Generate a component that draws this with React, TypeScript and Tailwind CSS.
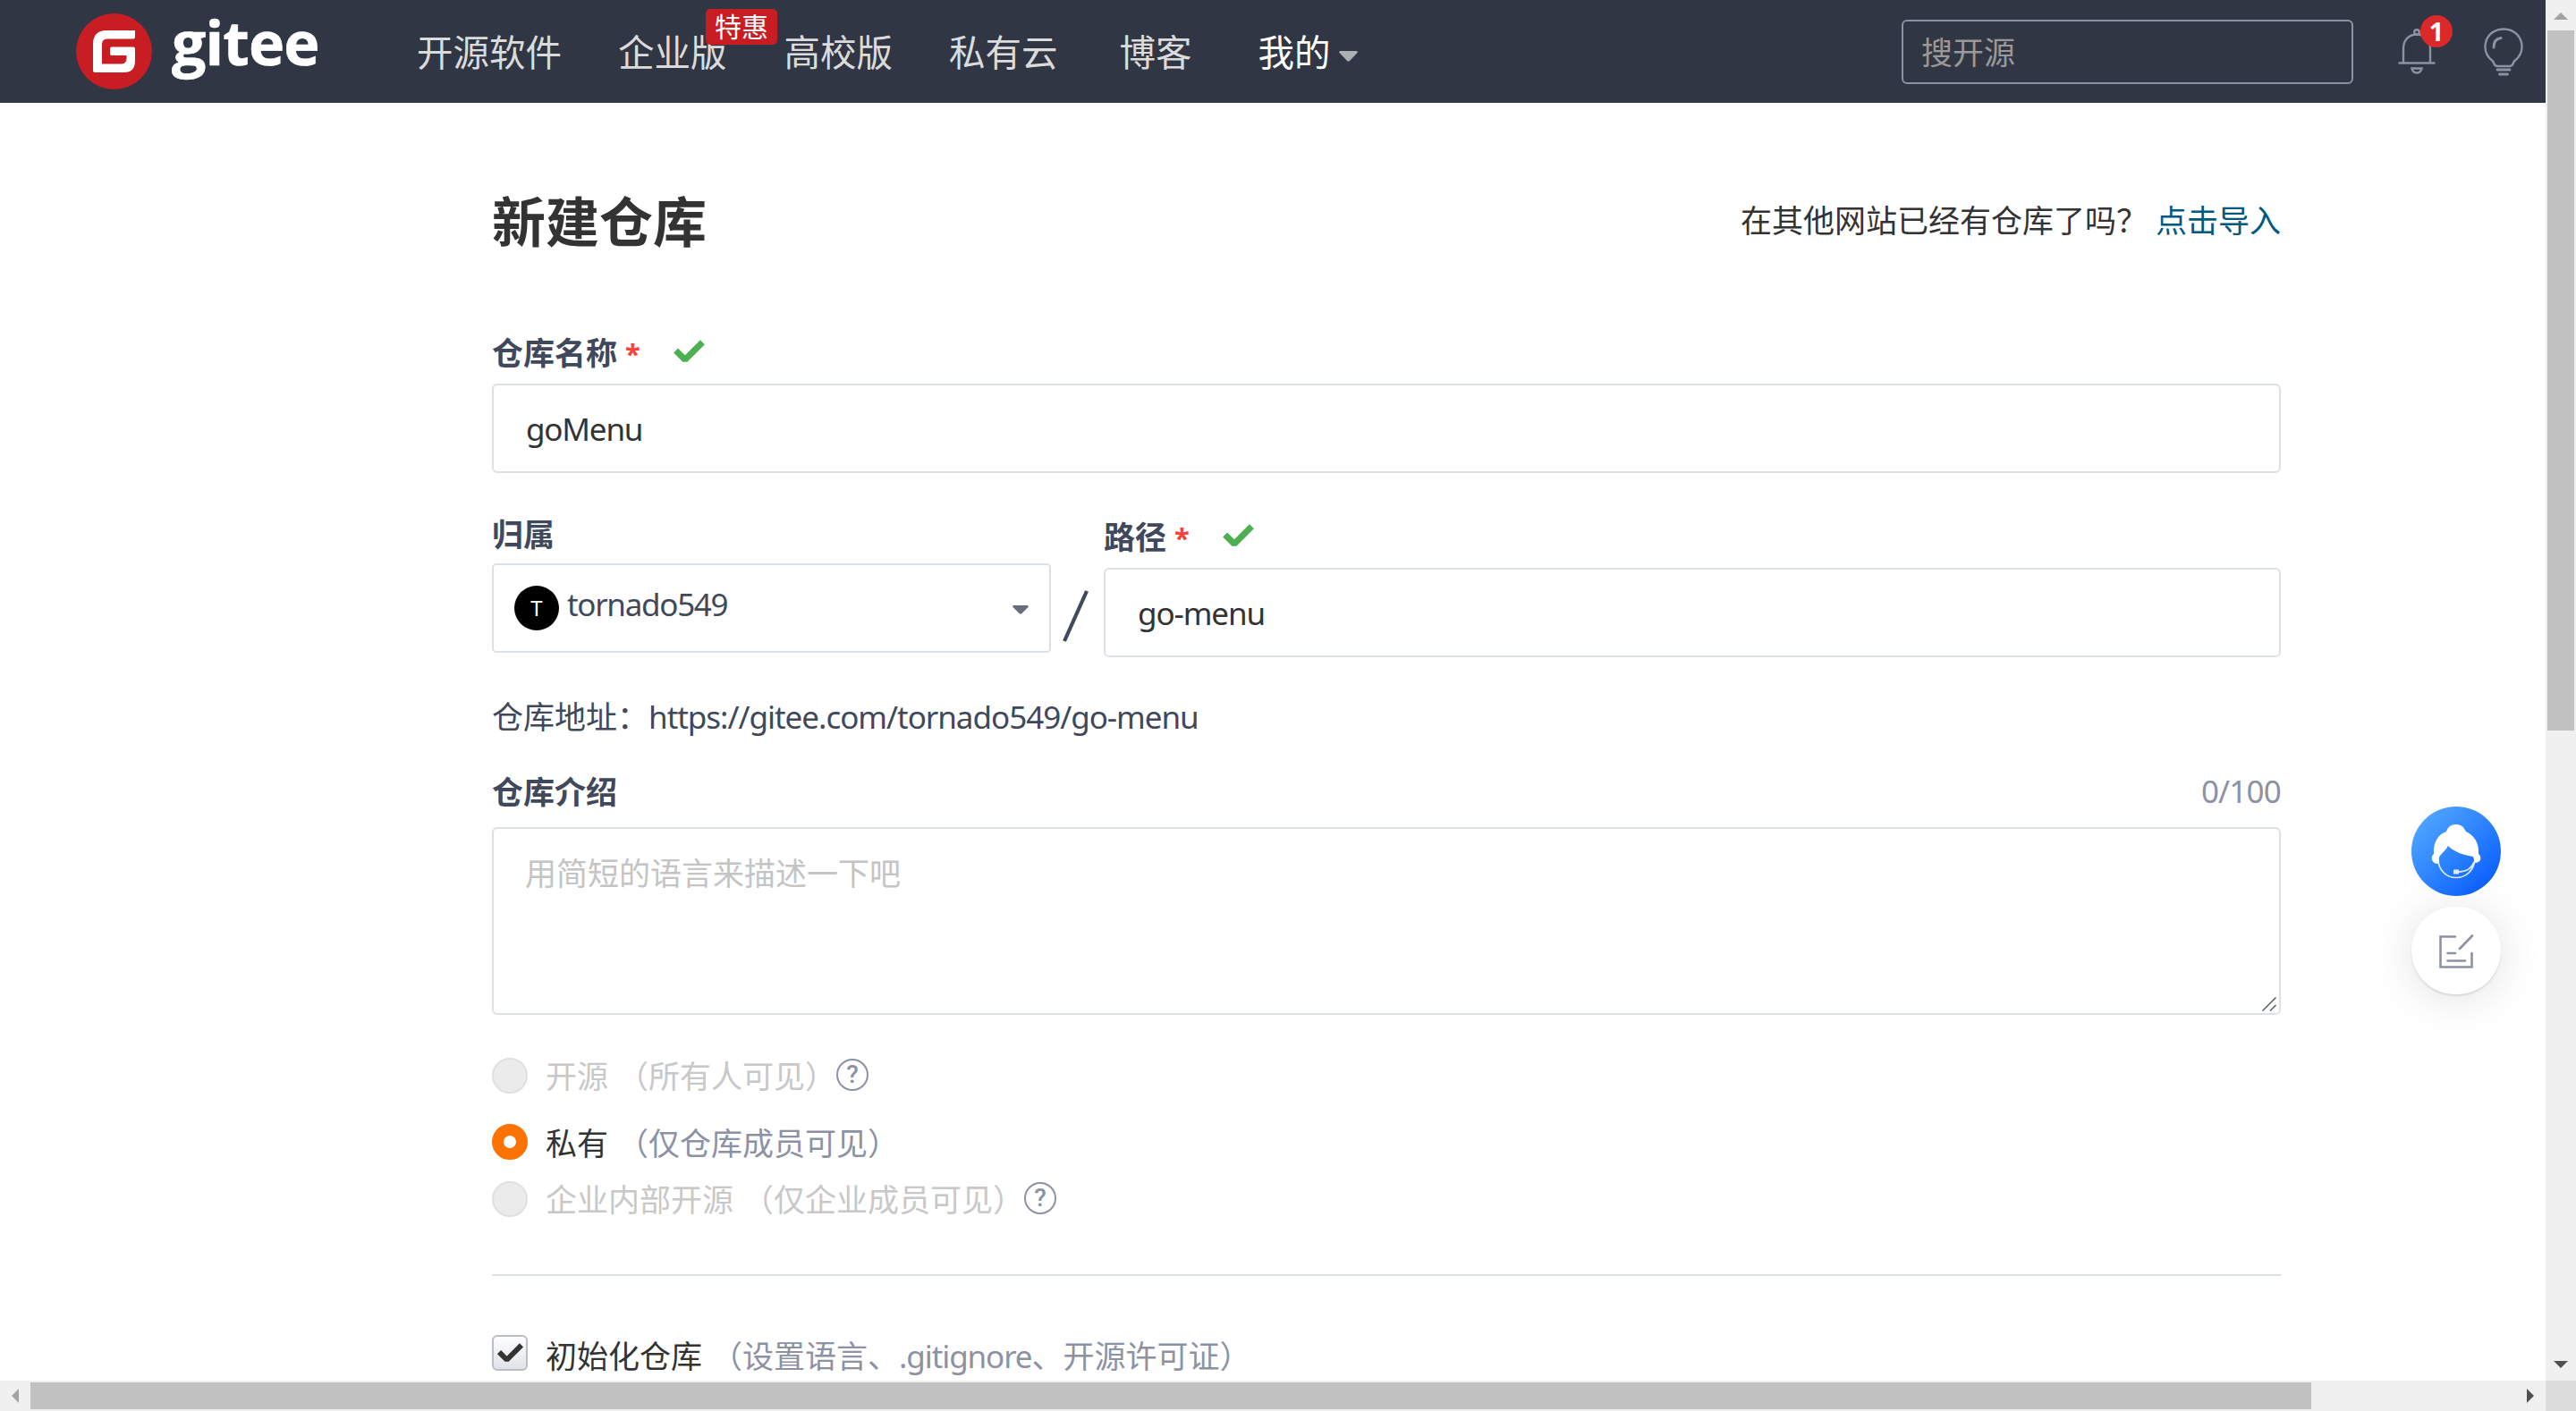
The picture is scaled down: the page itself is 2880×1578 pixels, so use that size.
import { useState } from "react";
import clsx from "clsx";

const NAV_ITEMS = [
  { label: "开源软件", className: "ml-[110px]" },
  { label: "企业版", className: "ml-[63px]", badge: "特惠" },
  { label: "高校版", className: "ml-16" },
  { label: "私有云", className: "ml-[63px]" },
  { label: "博客", className: "ml-[69px]" },
];

const VISIBILITY = [
  { id: "public", label: "开源", hint: "（所有人可见）", disabled: true, help: true, className: "mt-12" },
  { id: "private", label: "私有", hint: "（仅仓库成员可见）", disabled: false, help: false, className: "mt-[34px]" },
  { id: "inner", label: "企业内部开源", hint: "（仅企业成员可见）", disabled: true, help: true, className: "mt-6" },
];

function Logo() {
  return (
    <a className="ml-[85px] flex items-center">
      <svg className="h-[85px] w-[85px]" viewBox="0 0 85 85">
        <circle cx="42.5" cy="42.5" r="42.5" fill="#c71d23" />
        <path
          d="M66 19V26.500Q66 28.500 64 28.500H35Q29 28.500 29 34.500V56.500H50Q56.500 56.500 56.500 50.500V47H40Q38 47 38 45V39.500Q38 37.500 40 37.500H64Q66 37.500 66 39.500V53Q66 66 53.500 66H21Q19 66 19 64V34.500Q19 19 34 19Z"
          fill="#fff"
        />
      </svg>
      <span className="-mt-[22px] ml-[22px] w-[164px] font-['Open_Sans',sans-serif] text-[68px] leading-[84px] font-bold tracking-[-0.9px] text-white [-webkit-text-stroke:0.6px_#fff]">
        gitee
      </span>
    </a>
  );
}

function BellIcon() {
  return (
    <svg className="h-[52px] w-[42px]" viewBox="0 0 42 52" fill="none" stroke="#8c92a4" strokeWidth="2.4">
      <circle cx="21" cy="4" r="2.8" />
      <path d="M6 39V22C6 13 12 6.500 21 6.500S36 13 36 22V39" />
      <path d="M1.500 38.500H40.500" strokeLinecap="round" />
      <path d="M15.500 44.500H26.500Q25.500 49.500 21 49.500T15.500 44.500Z" />
    </svg>
  );
}

function BulbIcon() {
  return (
    <svg className="h-[54px] w-[44px]" viewBox="0 0 44 54" fill="none" stroke="#8c92a4" strokeWidth="2.4" strokeLinecap="round">
      <path d="M22 1.500C10 1.500 1.500 10 1.500 21.500C1.500 28 5 33.500 9.500 37C12 39 11 43 15 43H29C33 43 32 39 34.500 37C39 33.500 42.500 28 42.500 21.500C42.500 10 34 1.500 22 1.500Z" />
      <path d="M11 22Q11 12.500 19 11.500" strokeWidth="3" />
      <path d="M15 47H29M17.500 52H26.500" strokeWidth="2.8" />
    </svg>
  );
}

function Check({ className }: { className?: string }) {
  return (
    <svg className={className} viewBox="0 0 36 27">
      <path
        d="M3.500 12.500L13.500 22.500L32.500 3.500"
        fill="none"
        stroke="currentColor"
        strokeWidth="6.800"
        strokeLinejoin="bevel"
      />
    </svg>
  );
}

function HelpIcon() {
  return (
    <span className="mb-[2px] flex h-9 w-9 items-center justify-center rounded-full border-[2.5px] border-[#8c92a4] font-['Roboto',sans-serif] text-[28px] leading-none font-medium text-[#8c92a4]">
      ?
    </span>
  );
}

function Arrow({ className, d }: { className?: string; d: string }) {
  return (
    <svg className={clsx("h-4 w-4", className)} viewBox="0 0 16 16">
      <path d={d} fill="currentColor" />
    </svg>
  );
}

function FieldLabel({ text, className }: { text: string; className?: string }) {
  return (
    <div className={clsx("flex h-10 items-center font-bold text-[#40485b]", className)}>
      <span>{text}</span>
      <span className="ml-[9px] w-[17px] text-[31px] text-[#f44336]">*</span>
      <Check className="mb-[5px] ml-[36px] h-[28px] w-[37px] text-[#4caf50]" />
    </div>
  );
}

function Header() {
  return (
    <header className="flex h-[115px] shrink-0 items-center bg-[#303643]">
      <Logo />
      <nav className="mt-[2px] flex items-center text-[40.5px] leading-[60px] whitespace-nowrap text-[#dbdbdb]">
        {NAV_ITEMS.map((item) => (
          <a key={item.label} className={clsx("relative", item.className)}>
            {item.label}
            {item.badge && (
              <span className="absolute -top-[19px] left-[98px] flex h-10 w-20 items-center justify-center rounded-[5px] bg-[#c71d23] text-[30px] text-white">
                {item.badge}
              </span>
            )}
          </a>
        ))}
        <a className="ml-[74px] text-white">我的</a>
        <svg className="mt-2 ml-[9px] h-3 w-[21px] text-[#acafb4]" viewBox="0 0 21 12">
          <path d="M1 0H20L21 1.500L11.500 11.500H9.500L0 1.500Z" fill="currentColor" />
        </svg>
      </nav>
      <input
        className="ml-auto h-[72px] w-[505px] rounded-md border-2 border-[#8c92a4] px-5 pt-[2px] text-[35px] placeholder:text-[#999]"
        placeholder="搜开源"
      />
      <div className="relative ml-[50px]">
        <BellIcon />
        <span className="absolute -top-[15px] left-[25px] flex h-9 w-9 items-center justify-center rounded-full bg-[#db2828] font-['Open_Sans',sans-serif] text-[29px] leading-none font-bold text-white">
          1
        </span>
      </div>
      <div className="mr-[25px] ml-[54px]">
        <BulbIcon />
      </div>
    </header>
  );
}

function RepoForm() {
  const [name, setName] = useState("goMenu");
  const [path, setPath] = useState("go-menu");
  const [description, setDescription] = useState("");
  const [visibility, setVisibility] = useState("private");

  return (
    <main className="ml-[550px] w-[2000px]">
      <div className="mt-[98px] flex h-[70px] items-center justify-between">
        <h1 className="text-[60px] leading-[70px] font-bold text-[#333]">新建仓库</h1>
        <p className="mb-[2px] flex">
          在其他网站已经有仓库了吗？
          <a className="ml-[9px] text-[#005980]">点击导入</a>
        </p>
      </div>

      <FieldLabel text="仓库名称" className="mt-[92px]" />
      <input
        className="mt-[14px] block h-[100px] w-full rounded-md border-2 border-[#dce1e6] px-9 tracking-[-1.2px]"
        value={name}
        onChange={(e) => setName(e.target.value)}
      />

      {/* Owner and path */}
      <div className="flex items-start">
        <div className="mt-[49px] w-[625px]">
          <div className="h-10 leading-10 font-bold text-[#40485b]">归属</div>
          <button className="mt-3 flex h-[100px] w-full items-center rounded-[5px] border-2 border-[#dce1e6] px-[23px] text-[#40485b]">
            <span className="flex h-[50px] w-[50px] items-center justify-center rounded-full bg-black text-[24px] text-white">
              T
            </span>
            <span className="mb-2 ml-[9px] tracking-[-1.3px]">tornado549</span>
            <svg className="mt-1 ml-auto h-[10px] w-[18px]" viewBox="0 0 18 10">
              <path d="M1 0H17L18 1.500L10 9.500H8L0 1.500Z" fill="#666e7e" />
            </svg>
          </button>
        </div>
        <svg className="mx-3 mt-[130px] h-[60px] w-[35px]" viewBox="0 0 35 60">
          <path d="M3 58L28 2" stroke="#40485b" strokeWidth="4.200" />
        </svg>
        <div className="mt-[52px] flex-1">
          <FieldLabel text="路径" />
          <input
            className="mt-[14px] block h-[100px] w-full rounded-md border-2 border-[#dce1e6] px-9 tracking-[-1.1px]"
            value={path}
            onChange={(e) => setPath(e.target.value)}
          />
        </div>
      </div>

      <p className="mt-[47px] flex h-10 items-center text-[#40485b]">
        仓库地址：<span className="tracking-[-1.02px]">https://gitee.com/tornado549/{path}</span>
      </p>

      <div className="mt-11 flex h-10 items-center justify-between">
        <span className="font-bold text-[#40485b]">仓库介绍</span>
        <span className="mb-[2px] tracking-[-0.8px] text-[#8c92a4]">{description.length}/100</span>
      </div>
      <div className="relative mt-[19px] h-[210px]">
        <textarea
          className="block h-full w-full resize-none rounded-md border-2 border-[#dce1e6] px-[35px] py-[23px] leading-[54px] placeholder:text-[#c4c4c4]"
          placeholder="用简短的语言来描述一下吧"
          value={description}
          onChange={(e) => setDescription(e.target.value)}
        />
        <svg className="absolute right-[5px] bottom-1 h-4 w-4" viewBox="0 0 16 16">
          <path d="M0.500 15.500L15.500 0.500M9 15.500L15.500 9" stroke="#555" strokeWidth="1.400" />
        </svg>
      </div>

      {VISIBILITY.map((item) => (
        <label key={item.id} className={clsx("flex h-10 items-center", item.className)}>
          <input
            type="radio"
            name="visibility"
            className="peer sr-only"
            disabled={item.disabled}
            checked={visibility === item.id}
            onChange={() => setVisibility(item.id)}
          />
          <span
            className={clsx(
              "h-10 w-10 rounded-full",
              visibility === item.id ? "border-[13px] border-[#fe7300] bg-white" : "border-2 border-[#e0e0e0] bg-[#ebebeb]",
            )}
          />
          <span className={clsx("ml-[20px] flex gap-[10px]", item.disabled ? "mt-[2px] text-[#c8c8c8]" : "mt-1 text-[#333]")}>
            {item.label}
            <span className={clsx(!item.disabled && "text-[#8c92a4]")}>{item.hint}</span>
          </span>
          {item.help && <HelpIcon />}
        </label>
      ))}

      <hr className="mt-16 border-t-2 border-[#dce1e6]" />

      <label className="mt-[66px] flex h-10 items-center">
        <span className="flex h-10 w-10 items-center justify-center rounded-md border-2 border-[#b9bdc5] bg-linear-to-b from-white to-[#e0e2ea]">
          <Check className="h-[24px] w-[31px] text-[#333]" />
        </span>
        <span className="mt-[7px] ml-[20px]">初始化仓库</span>
        <span className="mt-[7px] ml-[10px] text-[#8c92a4]">
          （设置语言、<span className="tracking-[-1.1px]">.gitignore</span>、开源许可证）
        </span>
      </label>
    </main>
  );
}

function FloatingTools() {
  return (
    <div className="absolute top-[902px] left-[2696px] flex flex-col gap-3">
      <div className="h-[100px] w-[100px] rounded-full bg-linear-135 from-[#5aadff] to-[#0450ff]">
        <svg viewBox="0 0 100 100">
          <path
            d="M30 64C22 64 21 56 25 53C24 40 30 31 39 28C41 22 45 20 50 20S58 22 61 28C70 32 76 41 75 53C79 56 78 63 71 63L69 56C58 54 48 51 41 44C38 50 32 53 31 57Z"
            fill="#fff"
          />
          <path d="M30 59C30 71 39 79.500 50 79.500S69 72 71 60M52 73Q66 73 70 62" fill="none" stroke="#fff" strokeWidth="1.700" opacity="0.85" />
          <rect x="47" y="70.500" width="6" height="5" fill="#fff" opacity="0.85" />
        </svg>
      </div>
      <div className="h-[98px] w-[100px] rounded-full bg-white shadow-[0_2px_2px_rgba(0,0,0,0.1),0_4px_50px_rgba(0,0,0,0.12)]">
        <svg viewBox="0 0 100 98" fill="none" stroke="#8c92a4" strokeWidth="2.600" strokeLinecap="round">
          <path d="M49 33.500H32.500V67.500H67.500V52M40.500 52H49M40.500 60.500H60M54 47L68 32.500" />
        </svg>
      </div>
    </div>
  );
}

export default function App() {
  return (
    <div className="relative flex h-[1578px] w-[2880px] flex-col overflow-hidden bg-white font-['Noto_Sans','Noto_Sans_CJK_SC',sans-serif] text-[35px] leading-10 text-[#333]">
      <div className="flex h-[1544px]">
        <div className="flex w-[2846px] flex-col overflow-hidden">
          <Header />
          <RepoForm />
        </div>
        <div className="flex w-[34px] flex-col items-center justify-between bg-[#f0f0f0]">
          <div>
            <div className="flex h-[34px] justify-center pt-[10px]">
              <Arrow className="text-[#a3a3a3]" d="M0 12L8 4L16 12Z" />
            </div>
            <div className="h-[783px] w-[30px] bg-[#c1c1c1]" />
          </div>
          <Arrow className="mb-[10px] text-[#505050]" d="M0 4L8 12L16 4Z" />
        </div>
      </div>
      <div className="flex h-[34px] items-center bg-[#f0f0f0]">
        <Arrow className="mx-[9px] text-[#a3a3a3]" d="M12 0L4 8L12 16Z" />
        <div className="h-[30px] w-[2550px] bg-[#c1c1c1]" />
        <Arrow className="mr-[9px] ml-auto text-[#505050]" d="M4 0L12 8L4 16Z" />
        <div className="h-[34px] w-[34px] bg-[#dcdcdc]" />
      </div>
      <FloatingTools />
    </div>
  );
}
